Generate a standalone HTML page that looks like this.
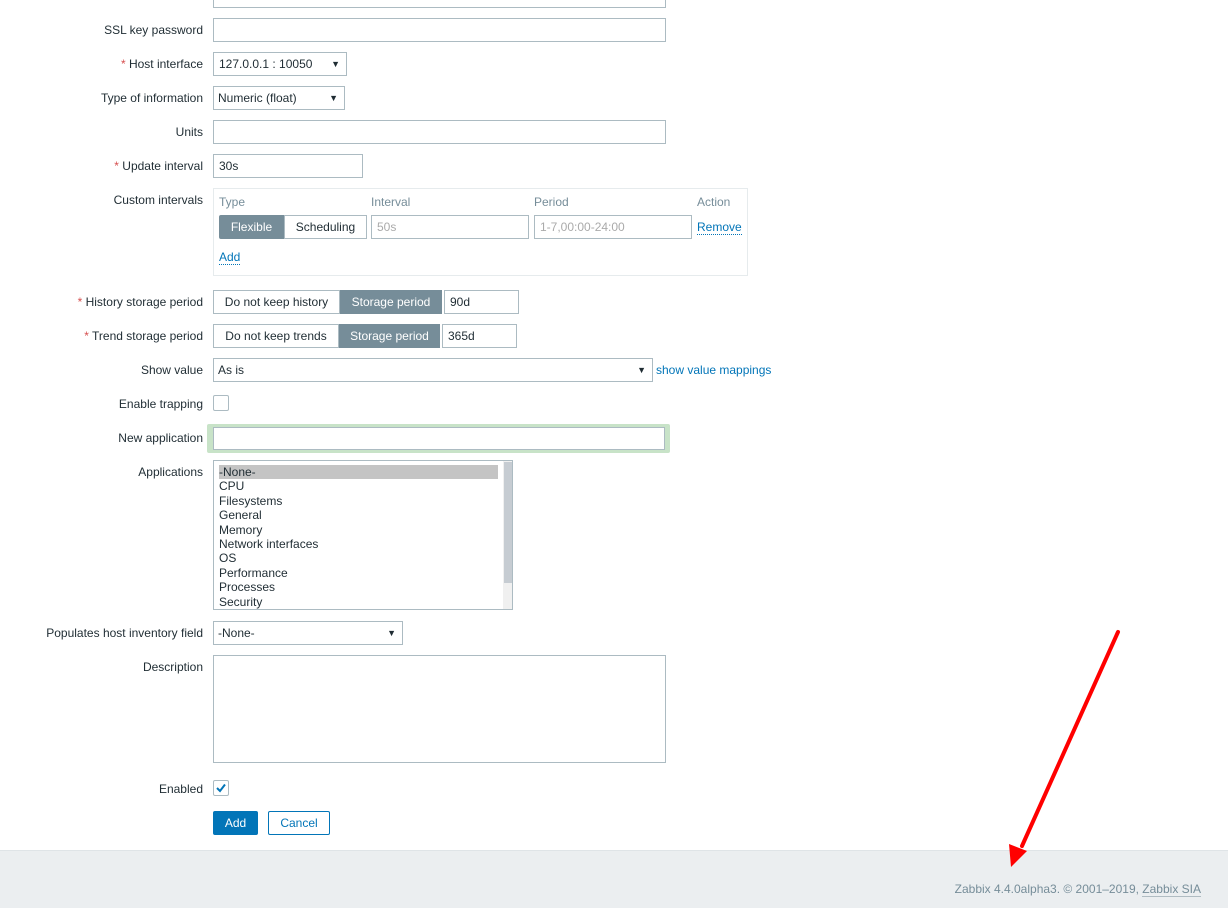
<!DOCTYPE html>
<html><head><meta charset="utf-8"><style>
*{box-sizing:border-box;margin:0;padding:0}
body{width:1228px;height:908px;position:relative;background:#fff;font-family:"Liberation Sans",Arial,sans-serif;font-size:12px;color:#1f2c33;overflow:hidden}
.a{position:absolute}
.l{position:absolute;right:1025px;text-align:right;white-space:nowrap;line-height:14px}
.r{color:#d64e4e}
.f{position:absolute;border:1px solid #acbbc2;background:#fff;height:24px;line-height:22px;padding-left:5px;white-space:nowrap}
.sel::after{content:"▼";position:absolute;right:6px;top:0;font-size:9px}
.btn{position:absolute;height:24px;line-height:22px;text-align:center;border:1px solid #acbbc2;background:#fff;white-space:nowrap}
.on{background:#768d99;color:#fff;border-color:#768d99}
.lnk{color:#0275b8;border-bottom:1px dotted #0275b8}
.g{color:#768d99}
.ph{color:#aaa}
</style></head><body>
<div class="f" style="left:213px;top:-16px;width:453px"></div>
<div class="l" style="top:23px">SSL key password</div>
<div class="f" style="left:213px;top:18px;width:453px"></div>
<div class="l" style="top:57px"><span class="r">*</span> Host interface</div>
<div class="f sel" style="left:213px;top:52px;width:134px">127.0.0.1 : 10050</div>
<div class="l" style="top:91px">Type of information</div>
<div class="f sel" style="left:213px;top:86px;width:132px;padding-left:4px">Numeric (float)</div>
<div class="l" style="top:125px">Units</div>
<div class="f" style="left:213px;top:120px;width:453px"></div>
<div class="l" style="top:159px"><span class="r">*</span> Update interval</div>
<div class="f" style="left:213px;top:154px;width:150px">30s</div>
<div class="l" style="top:193px">Custom intervals</div>
<div class="a" style="left:213px;top:188px;width:535px;height:88px;border:1px solid #e6ebed"></div>
<div class="a g" style="left:219px;top:195px">Type</div>
<div class="a g" style="left:371px;top:195px">Interval</div>
<div class="a g" style="left:534px;top:195px">Period</div>
<div class="a g" style="left:697px;top:195px">Action</div>
<div class="btn on" style="left:219px;top:215px;width:65px;border-radius:2px 0 0 2px">Flexible</div>
<div class="btn" style="left:284px;top:215px;width:83px">Scheduling</div>
<div class="f ph" style="left:371px;top:215px;width:158px">50s</div>
<div class="f ph" style="left:534px;top:215px;width:158px">1-7,00:00-24:00</div>
<div class="a" style="left:697px;top:220px"><span class="lnk">Remove</span></div>
<div class="a" style="left:219px;top:250px"><span class="lnk">Add</span></div>
<div class="l" style="top:295px"><span class="r">*</span> History storage period</div>
<div class="btn" style="left:213px;top:290px;width:127px">Do not keep history</div>
<div class="btn on" style="left:340px;top:290px;width:102px">Storage period</div>
<div class="f" style="left:444px;top:290px;width:75px">90d</div>
<div class="l" style="top:329px"><span class="r">*</span> Trend storage period</div>
<div class="btn" style="left:213px;top:324px;width:126px">Do not keep trends</div>
<div class="btn on" style="left:339px;top:324px;width:101px">Storage period</div>
<div class="f" style="left:442px;top:324px;width:75px">365d</div>
<div class="l" style="top:363px">Show value</div>
<div class="f sel" style="left:213px;top:358px;width:440px;padding-left:4px">As is</div>
<div class="a" style="left:656px;top:363px;color:#0275b8">show value mappings</div>
<div class="l" style="top:397px">Enable trapping</div>
<div class="a" style="left:213px;top:395px;width:16px;height:16px;border:1px solid #acbbc2;border-radius:2px"></div>
<div class="l" style="top:431px">New application</div>
<div class="a" style="left:207px;top:424px;width:463px;height:29px;background:#c8e3c8;border-radius:2px"></div>
<div class="f" style="left:213px;top:427px;width:452px;height:23px"></div>
<div class="l" style="top:465px">Applications</div>
<div class="a" style="left:213px;top:460px;width:300px;height:150px;border:1px solid #acbbc2;overflow:hidden;line-height:14.4px;padding:4px 0 0 5px">
<div style="background:#c4c4c4;width:279px">-None-</div><div>CPU</div><div>Filesystems</div><div>General</div><div>Memory</div><div>Network interfaces</div><div>OS</div><div>Performance</div><div>Processes</div><div>Security</div>
<div class="a" style="left:289px;top:0;width:10px;height:148px;background:#f0f0f0"></div>
<div class="a" style="left:290px;top:1px;width:8px;height:121px;background:#c6ccd2"></div>
</div>
<div class="l" style="top:626px">Populates host inventory field</div>
<div class="f sel" style="left:213px;top:621px;width:190px;padding-left:4px">-None-</div>
<div class="l" style="top:660px">Description</div>
<div class="f" style="left:213px;top:655px;width:453px;height:108px"></div>
<div class="l" style="top:782px">Enabled</div>
<div class="a" style="left:213px;top:780px;width:16px;height:16px;border:1px solid #acbbc2;border-radius:2px">
<svg width="14" height="14" viewBox="0 0 14 14" style="position:absolute;left:0;top:0"><path d="M3 7 L6 10 L11 3.5" fill="none" stroke="#0275b8" stroke-width="2"/></svg></div>
<div class="btn" style="left:213px;top:811px;width:45px;background:#0275b8;border-color:#0275b8;color:#fff;border-radius:2px">Add</div>
<div class="btn" style="left:268px;top:811px;width:62px;border-color:#0275b8;color:#0275b8;border-radius:2px">Cancel</div>
<div class="a" style="left:0;top:850px;width:1228px;height:58px;background:#ebeef0;border-top:1px solid #dfe4e7"></div>
<div class="a" style="right:27px;top:882px;color:#768d99">Zabbix 4.4.0alpha3. © 2001–2019, <span style="border-bottom:1px solid #b0bcc2">Zabbix SIA</span></div>
<svg class="a" style="left:0;top:0" width="1228" height="908"><line x1="1118" y1="632" x2="1022" y2="846" stroke="#f00" stroke-width="4" stroke-linecap="round"/><polygon points="1011,867 1009,844 1027,851" fill="#f00"/></svg>
</body></html>
